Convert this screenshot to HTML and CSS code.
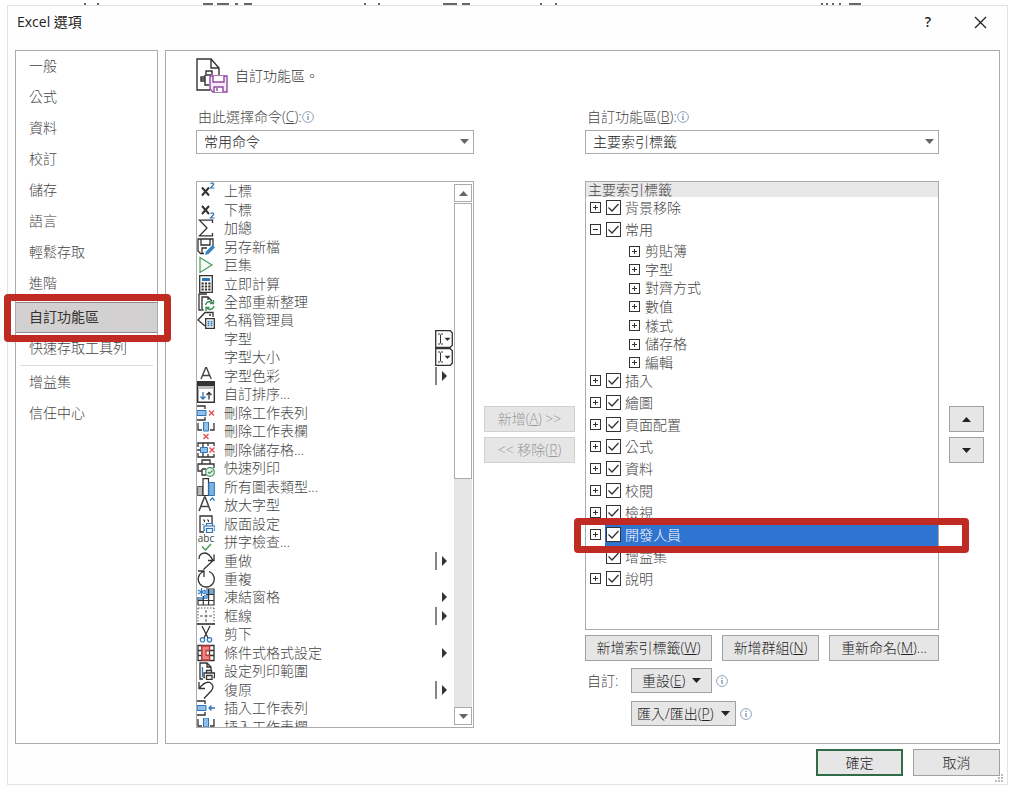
FILE: index.html
```html
<!DOCTYPE html>
<html lang="zh-Hant">
<head>
<meta charset="utf-8">
<meta name="viewport" content="width=device-width, initial-scale=1">
<title>Excel 選項</title>
<link rel="stylesheet" href="styles.css">
</head>
<body>
<svg class="defs" aria-hidden="true">
  <symbol id="info" viewBox="0 0 12 12"><circle cx="6" cy="6" r="5.4" fill="none" stroke="#8fa3bd"/><path d="M6 5v4M6 2.8v1.2" stroke="#5f7896" stroke-width="1.1"/></symbol>
  <symbol id="down" viewBox="0 0 9 5"><path d="M0 0h9L4.500 5z" fill="currentColor"/></symbol>
  <symbol id="up" viewBox="0 0 9 5"><path d="M0 5h9L4.500 0z" fill="currentColor"/></symbol>
  <symbol id="menu" viewBox="0 0 18 18"><path d="M7 4l5 5-5 5z" fill="#333"/></symbol>
  <symbol id="split" viewBox="0 0 18 18"><path d="M1 0v18" stroke="#444" stroke-width="1.300"/><path d="M7 4l5 5-5 5z" fill="#333"/></symbol>
  <symbol id="combo" viewBox="0 0 18 18"><path d="M.7.7h14.600l2 2v12.600l-2 2H.7z" fill="#fff" stroke="#333" stroke-width="1.300"/><path d="M3 4h2m1 0h2M3 14h2m1 0h2M5.500 4.500v9" stroke="#333" fill="none"/><path d="M9.500 7.800h6L12.500 11z" fill="#333"/></symbol>
</svg>
<svg class="behind" width="1000" height="2" viewBox="0 0 1000 2" aria-hidden="true"><path d="M77 1h2M90 1h2M196 1h10M210 1h12M228 1h3M237 1h8M357 1h2M371 1h2M436 1h14M455 1h8M533 1h2M548 1h2M814 1h2M819 1h2M825 1h2M832 1h2M842 1h12" stroke="#666" stroke-width="2"/></svg>
<div class="dialog">
  <header class="titlebar">
    <h1>Excel 選項</h1>
    <button class="winbtn" aria-label="說明">?</button>
    <button class="winbtn" aria-label="關閉"><svg width="13" height="13" viewBox="0 0 13 13"><path d="M1 1l11 11M12 1L1 12" stroke="#222" stroke-width="1.300"/></svg></button>
  </header>

  <div class="body">
    <nav class="side">
      <a href="#">一般</a>
      <a href="#">公式</a>
      <a href="#">資料</a>
      <a href="#">校訂</a>
      <a href="#">儲存</a>
      <a href="#">語言</a>
      <a href="#">輕鬆存取</a>
      <a href="#">進階</a>
      <a href="#" class="current" aria-current="page">自訂功能區<span class="mark mark-side"></span></a>
      <a href="#">快速存取工具列</a>
      <hr>
      <a href="#">增益集</a>
      <a href="#">信任中心</a>
    </nav>

    <main class="panel">
      <h2 class="heading">
        <svg width="33" height="36" viewBox="0 0 33 36" fill="none" stroke="#333" stroke-width="1.400"><path d="M14 32H1V1h14l8 9v7M15 1v9h8"/><path d="M15 17h-5v-4h6v4M9 17v2M5 19h4v4H5zM9 23v4h4M5 21h4" /><path d="M14 18h17v16H17l-3-3z" fill="#f6eaf8" stroke="#8e4aa0"/><path d="M17 18v6h11v-6M18 34v-5h9v5M21 30v3" fill="#fff" stroke="#8e4aa0"/></svg>
        自訂功能區。
      </h2>

      <div class="grid">
        <div class="field field-left">
          <label for="source">由此選擇命令(<u>C</u>):<svg width="12" height="12"><use href="#info"/></svg></label>
          <div class="pick"><select id="source"><option>常用命令</option></select><svg width="9" height="5"><use href="#down"/></svg></div>
        </div>
        <div class="field field-right">
          <label for="target">自訂功能區(<u>B</u>):<svg width="12" height="12"><use href="#info"/></svg></label>
          <div class="pick"><select id="target"><option>主要索引標籤</option></select><svg width="9" height="5"><use href="#down"/></svg></div>
        </div>

        <div class="commands">
          <ul role="listbox" aria-label="常用命令">
            <li role="option"><svg class="ico" viewBox="0 0 18 18"><path d="M5 5.500l7 8M12 5.500l-7 8" stroke="#333" stroke-width="2"/><path d="M13.500 1.800q3.500-2 3.200.7L13.500 6h4" fill="none" stroke="#2e75b6" stroke-width="1.200"/></svg>上標</li>
            <li role="option"><svg class="ico" viewBox="0 0 18 18"><path d="M5 5l7 8M12 5l-7 8" stroke="#333" stroke-width="2"/><path d="M13.500 12.800q3.500-2 3.200.7L13.500 17h4" fill="none" stroke="#2e75b6" stroke-width="1.200"/></svg>下標</li>
            <li role="option"><svg class="ico" viewBox="0 0 18 18"><path d="M15.500 4V1.200H2.500L10 9l-7.500 7.800h13V14" fill="none" stroke="#333" stroke-width="1.300"/></svg>加總</li>
            <li role="option"><svg class="ico" viewBox="0 0 18 18"><path d="M7 15.500H3.500L1 13V1h15v7M4 1v6h9V1M5 15v-5h5" fill="none" stroke="#333" stroke-width="1.300"/><path d="M8 17l1-3.500L15.500 7 18 9.500 11.500 16z" fill="#3a82c4"/></svg>另存新檔</li>
            <li role="option"><svg class="ico" viewBox="0 0 18 18"><path d="M3 1.500l12 7.500-12 7.500z" fill="#f4fbf5" stroke="#4a9a5c" stroke-width="1.200"/></svg>巨集</li>
            <li role="option"><svg class="ico" viewBox="0 0 18 18"><path d="M2.700.7h12.600v16.600H2.700z" fill="#fff" stroke="#333" stroke-width="1.300"/><path d="M5 3h8v3H5z" fill="#2e75b6"/><path d="M4.500 8.500h9M4.500 11.500h9M4.500 14.500h9" stroke="#333" stroke-width="2" stroke-dasharray="2.200 1.200"/></svg>立即計算</li>
            <li role="option"><svg class="ico" viewBox="0 0 18 18"><path d="M4 17H2V1h8M6.500 17H5V4h6l4 4M11 4v3" fill="none" stroke="#333" stroke-width="1.300"/><path d="M8.500 12q1-3.500 4.500-3.500l3 1.500M16.500 7v3.500H13M17 13q-1 3.500-4.500 3.500l-3-1.500M9 18v-3.500h3.500" fill="none" stroke="#3f9556" stroke-width="1.400"/></svg>全部重新整理</li>
            <li role="option"><svg class="ico" viewBox="0 0 18 18"><path d="M8 15L1 9l7-7.500h8V6" fill="none" stroke="#333" stroke-width="1.300"/><circle cx="13" cy="4" r="1" fill="#333"/><path d="M8.700 7.700h8.600v9.600H8.700z" fill="#fff" stroke="#333" stroke-width="1.300"/><path d="M10.500 10.500h2m1 0h2m-5 2h2m1 0h2m-5 2h2m1 0h2" stroke="#2e75b6" stroke-width="1.300"/></svg>名稱管理員</li>
            <li role="option"><span class="ico"></span>字型<svg class="ctl" viewBox="0 0 18 18"><use href="#combo"/></svg></li>
            <li role="option"><span class="ico"></span>字型大小<svg class="ctl" viewBox="0 0 18 18"><use href="#combo"/></svg></li>
            <li role="option"><svg class="ico" viewBox="0 0 18 18"><path d="M4 12L8.800.5h.6L14.200 12M5.800 8.500h7" fill="none" stroke="#444" stroke-width="1.400"/><path d="M0 14h18v4H0z" fill="#333"/></svg>字型色彩<svg class="ctl" viewBox="0 0 18 18"><use href="#split"/></svg></li>
            <li role="option"><svg class="ico" viewBox="0 0 18 18"><path d="M.7.700h16.600v16.600H.7z" fill="#fff" stroke="#333" stroke-width="1.400"/><path d="M1 1h16v3H1z" fill="#bbb"/><path d="M6 7v7M3.500 11.500L6 14l2.500-2.500" fill="none" stroke="#2e75b6" stroke-width="1.300"/><path d="M12 14.500V7.500M9.500 10L12 7.500l2.500 2.500" fill="none" stroke="#333" stroke-width="1.300"/></svg>自訂排序...</li>
            <li role="option"><svg class="ico" viewBox="0 0 18 18"><path d="M0 2h8v3M0 16h8v-3" fill="none" stroke="#333" stroke-width="1.300"/><path d="M0 6.500h9v5H0z" fill="#8fc1ec" stroke="#2e75b6"/><path d="M12 6.500l5 5M17 6.500l-5 5" stroke="#d9534f" stroke-width="1.400"/></svg>刪除工作表列</li>
            <li role="option"><svg class="ico" viewBox="0 0 18 18"><path d="M1 1v7h4M17 1v7h-4" fill="none" stroke="#333" stroke-width="1.300"/><path d="M6.500 0h5v9h-5z" fill="#8fc1ec" stroke="#2e75b6"/><path d="M6.500 12l5 5M11.500 12l-5 5" stroke="#d9534f" stroke-width="1.400"/></svg>刪除工作表欄</li>
            <li role="option"><svg class="ico" viewBox="0 0 18 18"><path d="M1 6V2h16v3M1 12v4h16v-3M6 2v14M11 2v3M11 13v3M0 9h5" fill="none" stroke="#333" stroke-width="1.300"/><path d="M3.500 6.500h7v5h-7z" fill="#8fc1ec" stroke="#2e75b6"/><path d="M12.500 6.500l5 5M17.500 6.500l-5 5" stroke="#d9534f" stroke-width="1.400"/></svg>刪除儲存格...</li>
            <li role="option"><svg class="ico" viewBox="0 0 18 18"><path d="M5 5V1h8v4M5 12H1V5h16v4M5 10h4M5 10v6h4" fill="none" stroke="#333" stroke-width="1.300"/><circle cx="13" cy="13" r="4.300" fill="#eaf6ec" stroke="#3f9556" stroke-width="1.200"/><path d="M11 13l1.500 1.500 3-3" fill="none" stroke="#3f9556" stroke-width="1.200"/></svg>快速列印</li>
            <li role="option"><svg class="ico" viewBox="0 0 18 18"><path d="M.6 8.500h5v9h-5z" fill="#bbb" stroke="#555"/><path d="M6 .6h5.500v17H6z" fill="#fff" stroke="#333" stroke-width="1.200"/><path d="M11.800 4.500h5.600v13h-5.600z" fill="#7db1e2" stroke="#2e75b6"/></svg>所有圖表類型...</li>
            <li role="option"><svg class="ico" viewBox="0 0 18 18"><path d="M2 15L7.500 1h.6L13.500 15M4 10.500h7.500" fill="none" stroke="#444" stroke-width="1.500"/><path d="M13 4.500L15.300 2l2.300 2.500" fill="none" stroke="#2e75b6" stroke-width="1.200"/></svg>放大字型</li>
            <li role="option"><svg class="ico" viewBox="0 0 18 18"><path d="M7 17H3V1h12v7" fill="none" stroke="#333" stroke-width="1.300"/><path d="M6 5h1.500v2M10 5h1.500v2M6 9v1" stroke="#333" fill="none"/><path d="M9.500 11V8.500h6V11M8 15.500h-1V11h11v4.500h-1M9.500 13.500h6v4h-6z" fill="#eaf3fb" stroke="#2e75b6" stroke-width="1.200"/></svg>版面設定</li>
            <li role="option"><span class="ico spell">abc<svg width="11" height="8" viewBox="0 0 11 8"><path d="M1 3.500L4.500 7 10 1" fill="none" stroke="#3f9556" stroke-width="1.400"/></svg></span>拼字檢查...</li>
            <li role="option"><svg class="ico" viewBox="0 0 18 18"><path d="M2 7Q2 1 8 1q4 0 8 7.500M17 2.500v6h-6M16 8.500L6.500 17.500" fill="none" stroke="#333" stroke-width="1.300"/></svg>重做<svg class="ctl" viewBox="0 0 18 18"><use href="#split"/></svg></li>
            <li role="option"><svg class="ico" viewBox="0 0 18 18"><path d="M1 1h6v6M6.500 1.500A8 8 0 1 0 12 1.500" fill="none" stroke="#333" stroke-width="1.300"/></svg>重複</li>
            <li role="option"><svg class="ico" viewBox="0 0 18 18"><path d="M7 7h4v4H7zM12 2h4.500v4H12zM2 9h4v3H2zM7 2h4v4H7z" fill="#6aa9e0"/><path d="M9 1h8v16H1V9M1 12.500h16M6.300 8v9M11.600 1v16M9 6.500h8" fill="none" stroke="#333" stroke-width="1.200"/><path d="M4.500 0v8M1 2l7 4M8 2L1 6" stroke="#2e75b6" stroke-width="1.200"/></svg>凍結窗格<svg class="ctl" viewBox="0 0 18 18"><use href="#menu"/></svg></li>
            <li role="option"><svg class="ico" viewBox="0 0 18 18"><path d="M1 1h16M1 1v16M17 1v16" stroke="#555" stroke-dasharray="1.500 1.500"/><path d="M3 9h12M9 3v12" stroke="#555" stroke-dasharray="3 1.500"/><path d="M0 17h18" stroke="#222" stroke-width="1.500"/></svg>框線<svg class="ctl" viewBox="0 0 18 18"><use href="#split"/></svg></li>
            <li role="option"><svg class="ico" viewBox="0 0 18 18"><path d="M5 1l6 12M13 1L7 13" stroke="#333" stroke-width="1.300"/><circle cx="5.500" cy="14.800" r="2.200" fill="#fff" stroke="#2e75b6" stroke-width="1.200"/><circle cx="12.500" cy="14.800" r="2.200" fill="#fff" stroke="#2e75b6" stroke-width="1.200"/></svg>剪下</li>
            <li role="option"><svg class="ico" viewBox="0 0 18 18"><path d="M1 1.500h16v15H1zM1 6.500h16M1 11.500h16M5 1.500v15M12.500 1.500v15" fill="none" stroke="#333" stroke-width="1.300"/><path d="M5 2h7.500v4.500H9v5h3.500V16H5z" fill="#ef8683" stroke="#c63c38" stroke-width="1.300"/></svg>條件式格式設定<svg class="ctl" viewBox="0 0 18 18"><use href="#menu"/></svg></li>
            <li role="option"><svg class="ico" viewBox="0 0 18 18"><path d="M6 17H3V1h7l4 4v3M10 1v4h4" fill="none" stroke="#333" stroke-width="1.300"/><path d="M5.500 5v10" stroke="#2e75b6" stroke-width="1.300"/><path d="M9.500 11V8.500h5V11M8 15.500H7V11h10.500v4.500h-1M9.500 13.500h5.500v4H9.500z" fill="#fff" stroke="#333" stroke-width="1.300"/></svg>設定列印範圍</li>
            <li role="option"><svg class="ico" viewBox="0 0 18 18"><path d="M2 1v6.500h6M2.500 7Q8 0 13 1.500q5 3 1.500 8L7 17.500" fill="none" stroke="#333" stroke-width="1.300"/></svg>復原<svg class="ctl" viewBox="0 0 18 18"><use href="#split"/></svg></li>
            <li role="option"><svg class="ico" viewBox="0 0 18 18"><path d="M0 2h8v3M0 16h8v-3" fill="none" stroke="#333" stroke-width="1.300"/><path d="M0 6.500h9v5H0z" fill="#8fc1ec" stroke="#2e75b6"/><path d="M18 9h-6M14.500 6.500L12 9l2.500 2.500" fill="none" stroke="#2e75b6" stroke-width="1.300"/></svg>插入工作表列</li>
            <li role="option"><svg class="ico" viewBox="0 0 18 18"><path d="M1 1v7h4M17 1v7h-4" fill="none" stroke="#333" stroke-width="1.300"/><path d="M6.500 0h5v9h-5z" fill="#8fc1ec" stroke="#2e75b6"/></svg>插入工作表欄</li>
          </ul>
          <div class="scroll">
            <button aria-label="向上捲動"><svg width="9" height="5"><use href="#up"/></svg></button>
            <div class="thumb"></div>
            <div class="track"></div>
            <button aria-label="向下捲動"><svg width="9" height="5"><use href="#down"/></svg></button>
          </div>
        </div>

        <div class="transfer">
          <button class="btn" disabled>新增(<u>A</u>) &gt;&gt;</button>
          <button class="btn" disabled>&lt;&lt; 移除(<u>R</u>)</button>
        </div>

        <div class="ribbon">
          <div class="tree">
            <h3>主要索引標籤</h3>
            <ul>
              <li><div class="node"><button class="exp" aria-label="展開"></button><label><input type="checkbox" checked>背景移除</label></div></li>
              <li><div class="node"><button class="exp open" aria-label="摺疊"></button><label><input type="checkbox" checked>常用</label></div>
                <ul class="groups">
                  <li><button class="exp" aria-label="展開"></button>剪貼簿</li>
                  <li><button class="exp" aria-label="展開"></button>字型</li>
                  <li><button class="exp" aria-label="展開"></button>對齊方式</li>
                  <li><button class="exp" aria-label="展開"></button>數值</li>
                  <li><button class="exp" aria-label="展開"></button>樣式</li>
                  <li><button class="exp" aria-label="展開"></button>儲存格</li>
                  <li><button class="exp" aria-label="展開"></button>編輯</li>
                </ul>
              </li>
              <li><div class="node"><button class="exp" aria-label="展開"></button><label><input type="checkbox" checked>插入</label></div></li>
              <li><div class="node"><button class="exp" aria-label="展開"></button><label><input type="checkbox" checked>繪圖</label></div></li>
              <li><div class="node"><button class="exp" aria-label="展開"></button><label><input type="checkbox" checked>頁面配置</label></div></li>
              <li><div class="node"><button class="exp" aria-label="展開"></button><label><input type="checkbox" checked>公式</label></div></li>
              <li><div class="node"><button class="exp" aria-label="展開"></button><label><input type="checkbox" checked>資料</label></div></li>
              <li><div class="node"><button class="exp" aria-label="展開"></button><label><input type="checkbox" checked>校閱</label></div></li>
              <li><div class="node"><button class="exp" aria-label="展開"></button><label><input type="checkbox" checked>檢視</label></div></li>
              <li><div class="node selected"><button class="exp" aria-label="展開"></button><label><input type="checkbox" checked>開發人員</label><span class="mark mark-tree"></span></div></li>
              <li><div class="node"><span class="noexp"></span><label><input type="checkbox" checked>增益集</label></div></li>
              <li><div class="node"><button class="exp" aria-label="展開"></button><label><input type="checkbox" checked>說明</label></div></li>
            </ul>
          </div>
          <div class="actions">
            <button class="btn">新增索引標籤(<u>W</u>)</button>
            <button class="btn">新增群組(<u>N</u>)</button>
            <button class="btn">重新命名(<u>M</u>)...</button>
          </div>
          <div class="custom">
            <span>自訂:</span>
            <div><button class="btn drop"><span>重設(<u>E</u>)</span><svg width="9" height="5"><use href="#down"/></svg></button><svg width="12" height="12"><use href="#info"/></svg></div>
            <div class="second"><button class="btn drop"><span>匯入/匯出(<u>P</u>)</span><svg width="9" height="5"><use href="#down"/></svg></button><svg width="12" height="12"><use href="#info"/></svg></div>
          </div>
        </div>

        <div class="transfer">
          <button class="btn" aria-label="上移"><svg width="9" height="5"><use href="#up"/></svg></button>
          <button class="btn" aria-label="下移"><svg width="9" height="5"><use href="#down"/></svg></button>
        </div>
      </div>
    </main>
  </div>

  <footer class="footer">
    <button class="btn ok">確定</button>
    <button class="btn">取消</button>
    <svg class="grip" width="9" height="9" viewBox="0 0 9 9"><path d="M6 0h2v2H6zM3 3h2v2H3zM6 3h2v2H6zM0 6h2v2H0zM3 6h2v2H3zM6 6h2v2H6z" fill="#bbb"/></svg>
  </footer>
</div>
</body>
</html>
```
FILE: styles.css
```css
* { box-sizing: border-box; }
body {
  margin: 0;
  padding: 3px 9px 12px 7px;
  background: #fff;
  color: #444;
  font: 300 14px/18px "Open Sans", "Noto Sans CJK TC", sans-serif;
}
.defs { position: absolute; width: 0; height: 0; }
.behind { display: block; max-width: 100%; }
ul { list-style: none; margin: 0; padding: 0; }
h1, h2, h3 { margin: 0; font: inherit; }
button { font: inherit; color: inherit; padding: 0; }
svg { flex: none; }

.dialog { border: 1px solid #e2e2e2; background: #fefefe; }

.titlebar { display: flex; align-items: center; height: 44px; padding: 0 15px 12px 9px; }
.titlebar h1 { flex: 1; color: #222; font-weight: 400; }
.winbtn {
  display: flex; align-items: center; justify-content: center;
  width: 24px; height: 24px; margin-left: 28px;
  border: 0; background: none; color: #222; font-weight: 600;
}

.body { display: flex; gap: 7px; padding: 0 7px; }
.side { flex: none; width: 143px; border: 1px solid #ababab; background: #fff; }
.side a {
  position: relative; display: flex; align-items: center;
  height: 31px; padding: 0 0 1px 13px; color: inherit; text-decoration: none;
}
.side .current {
  margin-top: 3px; background: #d2d0d0; color: #333; z-index: 1;
  border: solid #8c8c8c; border-width: 1px 0; font-weight: 400;
}
.side hr { height: 1px; margin: 1px 4px; border: 0; background: #dcdcdc; }

.mark {
  position: absolute; border: 7px solid #bf2a22; border-radius: 4px;
  pointer-events: none; z-index: 2;
}
.mark-side { inset: -9px -14px -10px -12px; }
.mark-tree { inset: -6px -31px -7px -12px; }

.panel {
  flex: 1; min-width: 0; padding: 7px 15px 15px 30px;
  border: 1px solid #ababab; background: #fff;
}
.heading { display: flex; align-items: center; gap: 6px; height: 36px; color: #333; }
.grid {
  display: grid; grid-template-columns: 278fr 91px 354fr 35px;
  column-gap: 10px; row-gap: 27px; margin-top: 14px;
}
.field-left { grid-column: 1; }
.field-right { grid-column: 3; }
.field label { display: flex; align-items: center; height: 18px; margin-bottom: 4px; padding-left: 2px; }
.pick { position: relative; }
.pick select {
  display: block; width: 100%; height: 24px; padding: 0 7px; appearance: none;
  border: 1px solid #ababab; border-radius: 0; background: #fff; font: inherit; color: #222;
}
.pick svg { position: absolute; right: 5px; top: 9px; color: #666; pointer-events: none; }

.commands {
  grid-column: 1; display: flex; gap: 1px; height: 547px; padding-right: 1px;
  border: 1px solid #ababab; background: #fff; overflow: hidden;
}
.commands ul { flex: 1; display: grid; grid-auto-rows: 1fr; height: 554px; }
.commands li { display: flex; align-items: center; white-space: nowrap; }
.ico { flex: none; width: 18px; height: 18px; margin-right: 9px; }
.ctl { width: 18px; height: 18px; margin-left: auto; }
.spell { display: flex; flex-direction: column; align-items: center; font: 400 10px/10px "Open Sans", sans-serif; }
.scroll { display: flex; flex-direction: column; gap: 1px; width: 18px; padding: 2px 0; height: 545px; color: #666; }
.scroll button {
  display: flex; align-items: center; justify-content: center;
  height: 18px; border: 1px solid #ababab; background: #fff;
}
.thumb { height: 276px; border: 1px solid #ababab; background: #fff; }
.track { flex: 1; background: #e6e6e6; margin: -1px 0; }

.transfer { display: flex; flex-direction: column; gap: 5px; padding-top: 225px; }
.btn {
  display: flex; align-items: center; justify-content: center;
  height: 26px; border: 1px solid #a0a0a0; background: #e6e6e6; color: #222;
  white-space: nowrap;
}
.btn:disabled { border-color: #d0d0d0; color: #999; }

.tree { min-height: 449px; border: 1px solid #ababab; background: #fff; }
.tree h3 { height: 15px; padding-left: 2px; line-height: 16px; background: #e9e8e8; }
.node { position: relative; display: flex; align-items: center; gap: 5px; height: 22px; padding: 0 0 1px 4px; }
.node label { flex: 1; display: flex; align-items: center; gap: 4px; }
.node input {
  width: 15px; height: 15px; margin: 0; appearance: none; border: 1px solid #333;
  background: #fff url("data:image/svg+xml,%3Csvg xmlns='http://www.w3.org/2000/svg' viewBox='0 0 13 13'%3E%3Cpath d='M1.500 6.500l3.500 3.500 6.500-7' fill='none' stroke='%23333' stroke-width='1.300'/%3E%3C/svg%3E");
}
.selected label { height: 22px; margin-left: -1px; padding-left: 1px; background: #2f74d0; color: #fff; }
.exp, .noexp { flex: none; width: 11px; height: 11px; }
.exp {
  border: 1px solid #333;
  background: linear-gradient(#333, #333) 50% 50% / 5px 1px no-repeat, linear-gradient(#333, #333) 50% 50% / 1px 5px no-repeat, #fff;
}
.exp.open { background: linear-gradient(#333, #333) 50% 50% / 5px 1px no-repeat, #fff; }
.groups { display: grid; grid-auto-rows: 1fr; height: 131px; margin-bottom: -2px; padding: 1px 0 0 43px; }
.groups li { display: flex; align-items: center; gap: 5px; }

.actions { display: grid; grid-template-columns: 127fr 97fr 110fr; gap: 10px; margin-top: 5px; }
.custom { display: grid; grid-template-columns: 44px 1fr; align-items: center; row-gap: 8px; margin-top: 7px; padding-left: 2px; }
.custom div { display: flex; align-items: center; gap: 4px; }
.custom .second { grid-column: 2; }
.drop { height: 25px; gap: 7px; padding: 0 10px; }
.second .drop { padding: 0 5px; }

.footer { position: relative; display: flex; justify-content: flex-end; gap: 10px; padding: 5px 7px 8px; }
.footer .btn { width: 87px; height: 27px; }
.footer .ok { border: 2px solid #2f6b47; }
.grip { position: absolute; right: 3px; bottom: 1px; }
```
